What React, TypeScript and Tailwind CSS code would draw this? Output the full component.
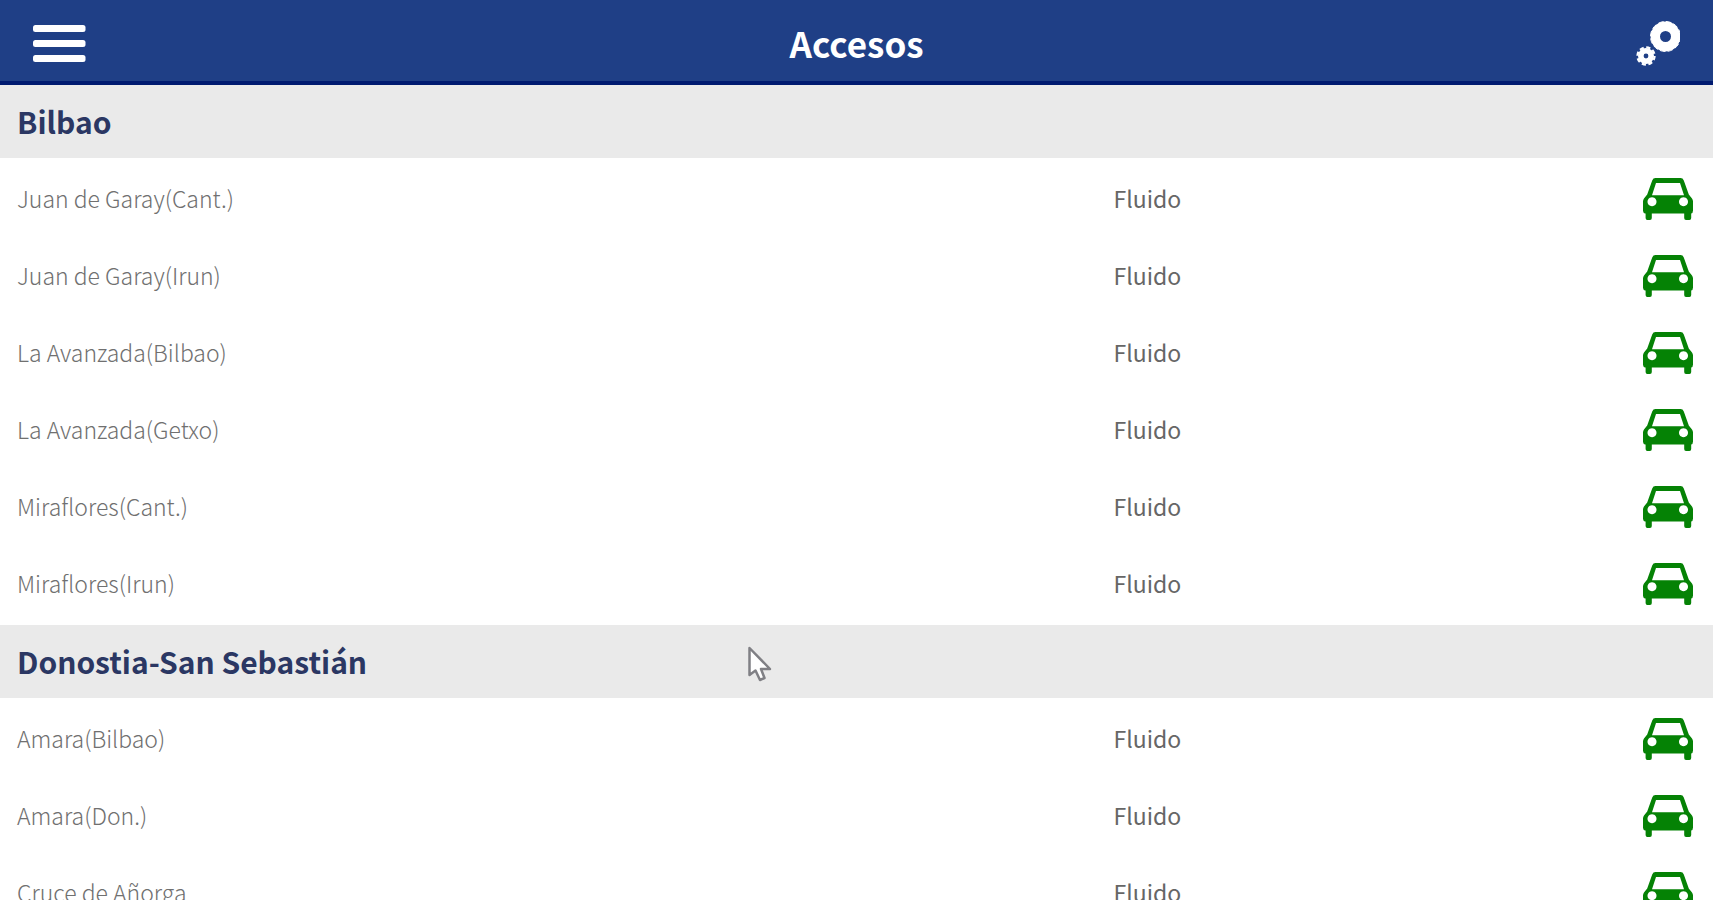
import type { ReactNode } from 'react';

type Access = { name: string; status: string };
type City = { name: string; accesses: Access[]; overlay?: ReactNode };

function MenuIcon() {
  return (
    <svg viewBox="0 0 54 40" className="w-[54px] h-10" fill="#fff">
      <rect x="0" y="1" width="52.5" height="7" rx="2.5" />
      <rect x="0" y="16" width="52.5" height="7" rx="2.5" />
      <rect x="0" y="31" width="52.5" height="7" rx="2.5" />
    </svg>
  );
}

function GearsIcon() {
  return (
    <svg viewBox="0 0 46 48" className="w-[46px] h-12" fill="none" stroke="#fff">
      <circle cx="31.5" cy="16.5" r="10.2" strokeWidth="9.4" />
      <circle cx="31.5" cy="16.5" r="15" strokeWidth="1" strokeDasharray="5.5 2.35" />
      <circle cx="12" cy="36" r="5.2" strokeWidth="5.6" />
      <circle cx="12" cy="36" r="8.6" strokeWidth="2.2" strokeDasharray="4.2 2.55" />
    </svg>
  );
}

function CarIcon() {
  return (
    <svg viewBox="0 0 50 42" className="w-[50px] h-[42px]" fill="#058205">
      <path
        fillRule="evenodd"
        d="M12.5 0h25q2.4 0 3.3 2.4L45.800 16.500l3.200 4q1 1.400 1 3v9q0 2.600-1.800 2.900V40q0 2-1.800 2h-3.400q-1.800 0-1.800-2v-4.500H8.800V40q0 2-1.800 2H4.400q-1.800 0-1.800-2v-4.600H1.800Q0 35 0 32.500v-9q0-1.600 1-3l3.200-4L9.200 2.400Q10.100 0 12.500 0ZM13 5 9 17.200h32L37 5ZM9 19.200a4.500 4.500 0 1 0 .01 0ZM40.500 19.200a4.500 4.500 0 1 0 .01 0Z"
      />
    </svg>
  );
}

function Pointer() {
  return (
    <svg
      viewBox="0 0 28 40"
      className="absolute left-[746px] top-[19px] w-7 h-10"
      fill="#fff"
      stroke="#808085"
      strokeWidth="2.5"
      strokeLinejoin="round"
    >
      <path d="M3.5 4v27l6-4.5 4.5 9.500 4.500-2-3.500-9h9Z" />
    </svg>
  );
}

const cities: City[] = [
  {
    name: 'Bilbao',
    accesses: [
      { name: 'Juan de Garay(Cant.)', status: 'Fluido' },
      { name: 'Juan de Garay(Irun)', status: 'Fluido' },
      { name: 'La Avanzada(Bilbao)', status: 'Fluido' },
      { name: 'La Avanzada(Getxo)', status: 'Fluido' },
      { name: 'Miraflores(Cant.)', status: 'Fluido' },
      { name: 'Miraflores(Irun)', status: 'Fluido' },
    ],
  },
  {
    name: 'Donostia-San Sebastián',
    overlay: <Pointer />,
    accesses: [
      { name: 'Amara(Bilbao)', status: 'Fluido' },
      { name: 'Amara(Don.)', status: 'Fluido' },
      { name: 'Cruce de Añorga', status: 'Fluido' },
    ],
  },
];

function CitySection({ name, accesses, overlay }: City) {
  return (
    <section>
      <h2 className="relative flex items-center h-[73px] px-[17px] bg-[#eaeaea] text-[30px] font-bold text-[#2b3763]">
        {name}
        {overlay}
      </h2>
      <div className="pt-0.5 pb-[3px]">
        <table className="w-full table-fixed text-[23px]">
          <tbody>
            {accesses.map((access) => (
              <tr key={access.name} className="h-[77px]">
                <td className="w-[65%] pl-[17px] font-light text-[#707070]">{access.name}</td>
                <td className="text-[#666]">{access.status}</td>
                <td className="w-[120px] pr-5">
                  <div className="flex justify-end">
                    <CarIcon />
                  </div>
                </td>
              </tr>
            ))}
          </tbody>
        </table>
      </div>
    </section>
  );
}

export default function App() {
  return (
    <div className="h-screen overflow-hidden bg-white font-['Noto_Sans_CJK_SC',sans-serif]">
      <header className="grid grid-cols-3 items-center h-[85px] pt-1.5 px-[33px] bg-[#1f3f86] border-b-4 border-[#001a70]">
        <button type="button" aria-label="Menú">
          <MenuIcon />
        </button>
        <h1 className="text-center text-[35px] font-bold text-white">Accesos</h1>
        <button type="button" aria-label="Ajustes" className="justify-self-end">
          <GearsIcon />
        </button>
      </header>
      <main>
        {cities.map((city) => (
          <CitySection key={city.name} {...city} />
        ))}
      </main>
    </div>
  );
}
